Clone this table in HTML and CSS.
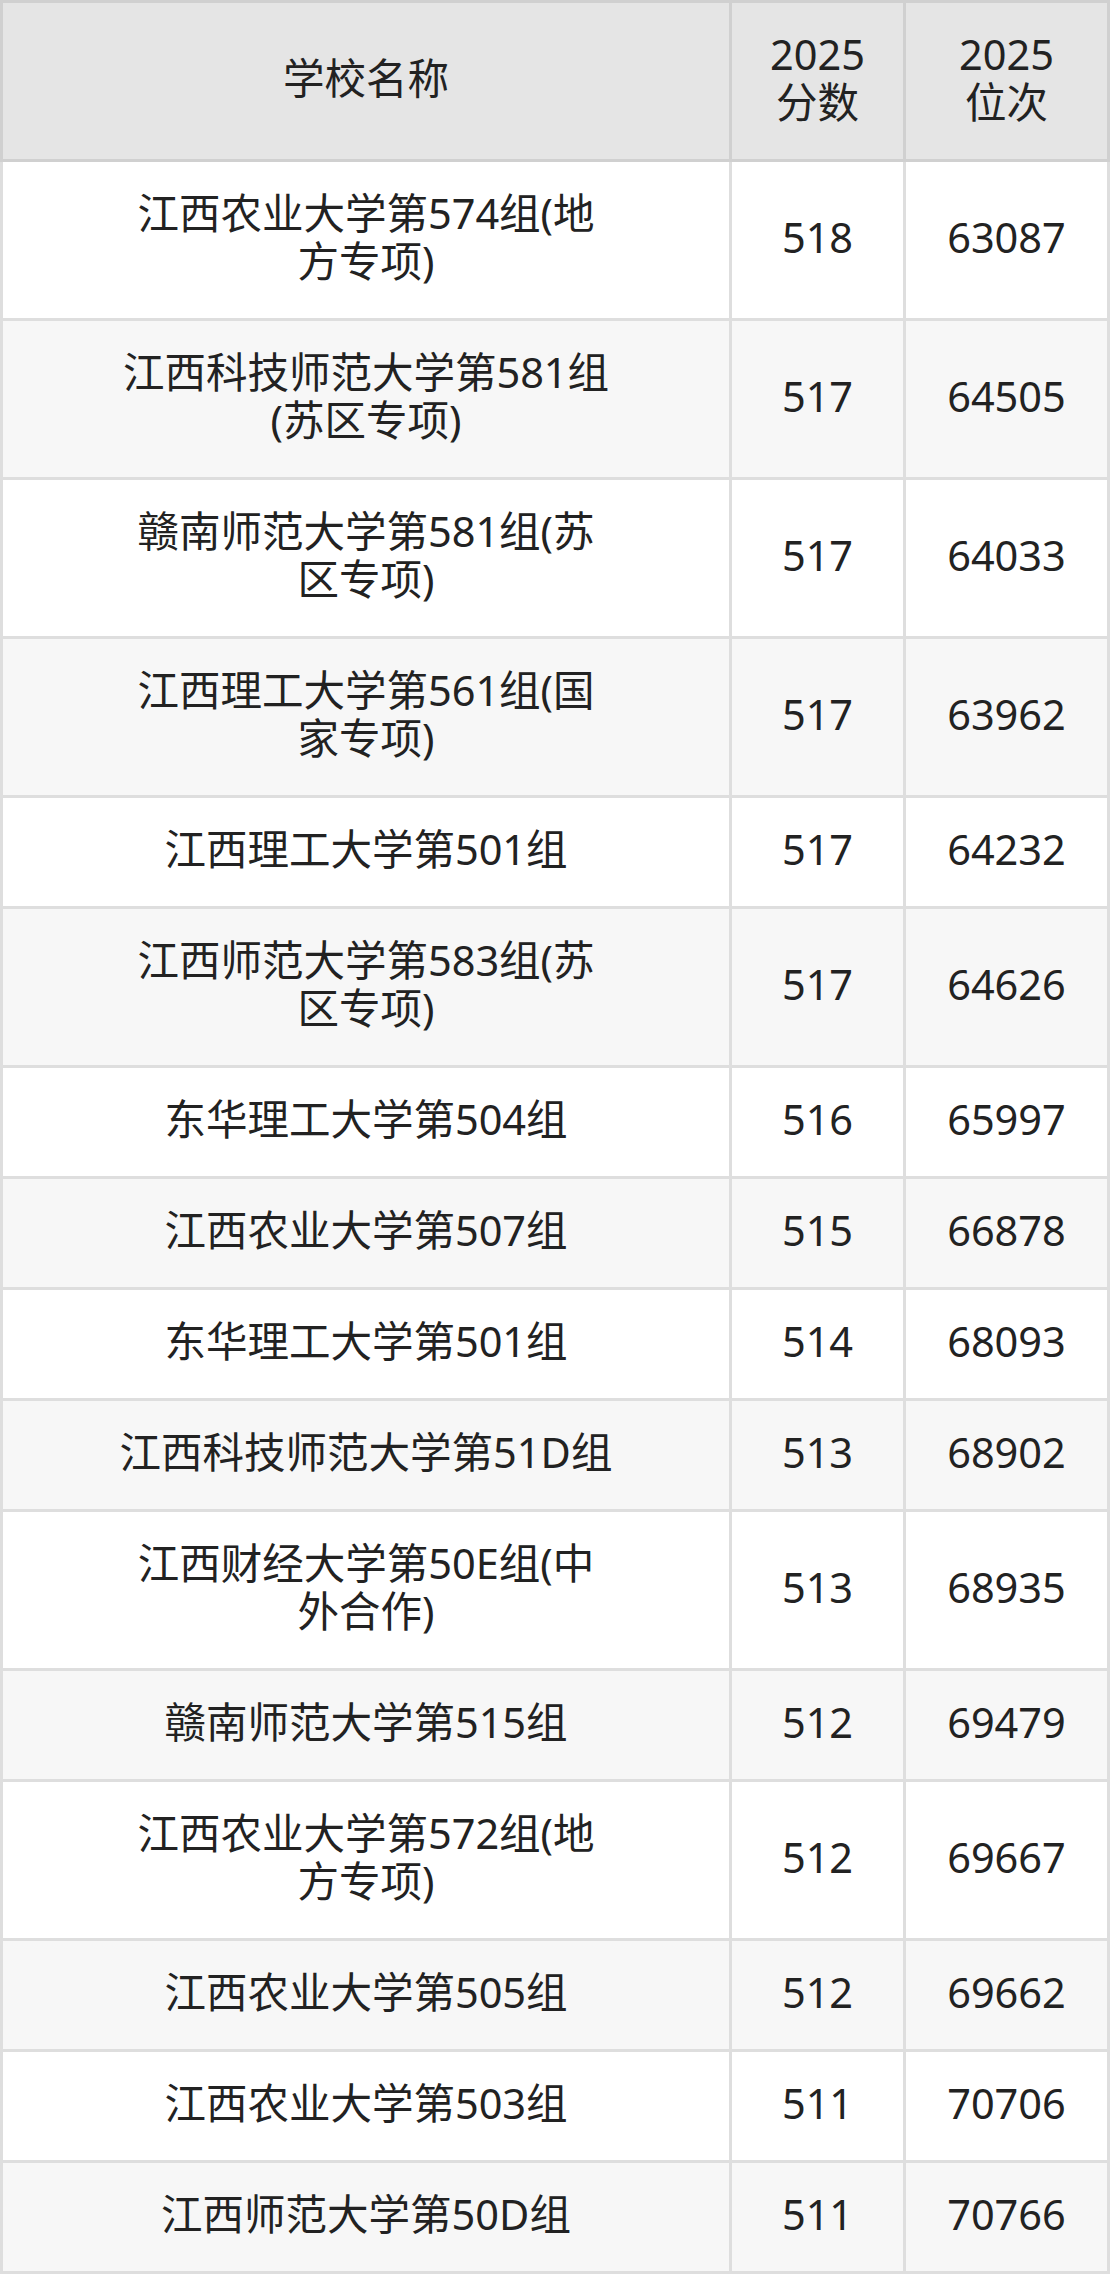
FILE: index.html
```html
<!DOCTYPE html>
<html lang="zh-CN">
<head>
<meta charset="utf-8">
<title>2025 分数位次</title>
<link rel="stylesheet" href="styles.css">
</head>
<body>
<table class="score-table">
  <colgroup>
    <col class="col-name">
    <col class="col-score">
    <col class="col-rank">
  </colgroup>
  <thead>
    <tr>
      <th>学校名称</th>
      <th>2025<br>分数</th>
      <th>2025<br>位次</th>
    </tr>
  </thead>
  <tbody>
    <tr><td>江西农业大学第574组(地<br>方专项)</td><td>518</td><td>63087</td></tr>
    <tr><td>江西科技师范大学第581组<br>(苏区专项)</td><td>517</td><td>64505</td></tr>
    <tr><td>赣南师范大学第581组(苏<br>区专项)</td><td>517</td><td>64033</td></tr>
    <tr><td>江西理工大学第561组(国<br>家专项)</td><td>517</td><td>63962</td></tr>
    <tr><td>江西理工大学第501组</td><td>517</td><td>64232</td></tr>
    <tr><td>江西师范大学第583组(苏<br>区专项)</td><td>517</td><td>64626</td></tr>
    <tr><td>东华理工大学第504组</td><td>516</td><td>65997</td></tr>
    <tr><td>江西农业大学第507组</td><td>515</td><td>66878</td></tr>
    <tr><td>东华理工大学第501组</td><td>514</td><td>68093</td></tr>
    <tr><td>江西科技师范大学第51D组</td><td>513</td><td>68902</td></tr>
    <tr><td>江西财经大学第50E组(中<br>外合作)</td><td>513</td><td>68935</td></tr>
    <tr><td>赣南师范大学第515组</td><td>512</td><td>69479</td></tr>
    <tr><td>江西农业大学第572组(地<br>方专项)</td><td>512</td><td>69667</td></tr>
    <tr><td>江西农业大学第505组</td><td>512</td><td>69662</td></tr>
    <tr><td>江西农业大学第503组</td><td>511</td><td>70706</td></tr>
    <tr><td>江西师范大学第50D组</td><td>511</td><td>70766</td></tr>
  </tbody>
</table>
</body>
</html>
```

FILE: styles.css
```css
html, body {
  margin: 0;
  padding: 0;
  background: #ffffff;
}

body {
  font-family: "Noto Sans", "Noto Sans CJK SC", sans-serif;
  color: #222222;
}

.score-table {
  width: 1110px;
  border-collapse: collapse;
  table-layout: fixed;
  font-size: 41.5px;
  line-height: 48px;
}

.col-name { width: 729px; }
.col-score { width: 174px; }
.col-rank { width: 204px; }

.score-table th,
.score-table td {
  padding: 27px 0 33px;
  text-align: center;
  vertical-align: middle;
  white-space: nowrap;
}

.score-table th {
  font-weight: normal;
  background: #e5e5e5;
  border: 3px solid #d0d0d0;
}

.score-table td {
  border: 3px solid #dedede;
}

.score-table tbody tr:nth-child(odd) td {
  background: #ffffff;
}

.score-table tbody tr:nth-child(even) td {
  background: #f7f7f7;
}
```
